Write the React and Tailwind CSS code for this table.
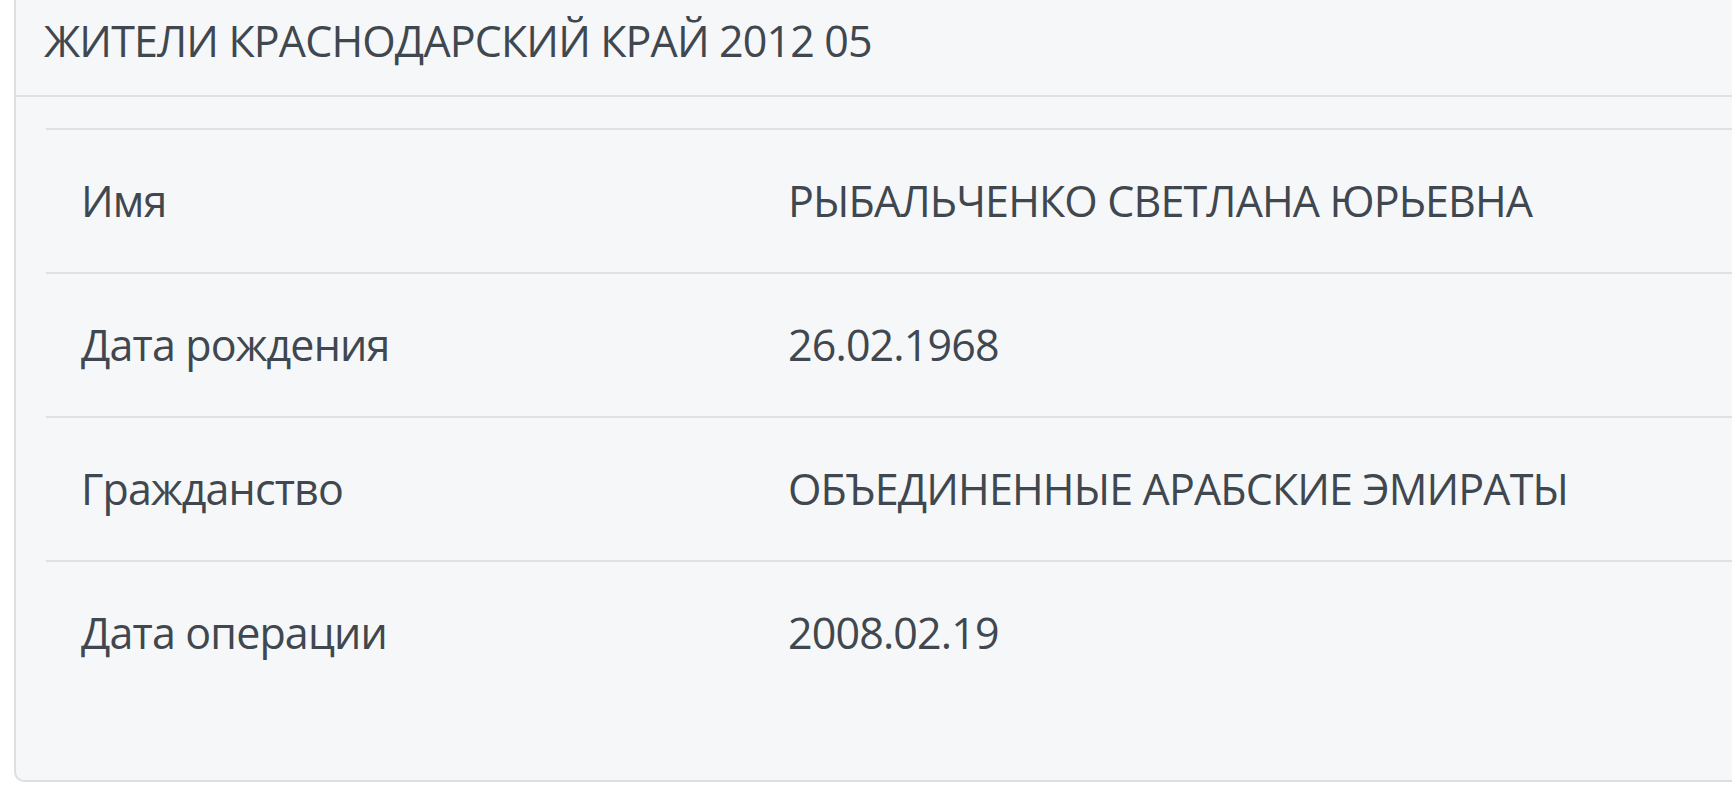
const rows = [
    { label: 'Имя', value: 'РЫБАЛЬЧЕНКО СВЕТЛАНА ЮРЬЕВНА' },
    { label: 'Дата рождения', value: '26.02.1968' },
    { label: 'Гражданство', value: 'ОБЪЕДИНЕННЫЕ АРАБСКИЕ ЭМИРАТЫ' },
    { label: 'Дата операции', value: '2008.02.19' },
];

export default function App() {
    return (
        <div className="min-h-screen overflow-hidden bg-white pl-[14px] font-['Open_Sans',sans-serif] text-[#40474f]">
            <div className="-mt-[14px] -mr-10 rounded-[10px] border-2 border-[#dcdfe2] bg-[#f6f7f9]">
                {/* Header */}
                <div className="flex h-[109px] items-center border-b-2 border-[#dfe2e5] px-[28px] pb-[2px]">
                    <h3 className="text-[43px] leading-none tracking-[-0.02em]">ЖИТЕЛИ КРАСНОДАРСКИЙ КРАЙ 2012 05</h3>
                </div>

                {/* Body */}
                <div className="px-[30px] pt-[31px] pb-[75px]">
                    <table className="w-full border-collapse">
                        <tbody>
                            {rows.map((row) => (
                                <tr key={row.label} className="h-[144px] border-t-2 border-[#dfe2e5]">
                                    <td className="w-[707px] px-[35px] align-middle text-[43px] tracking-[-0.02em]">{row.label}</td>
                                    <td className="px-[35px] align-middle text-[43px] tracking-[-0.02em]">{row.value}</td>
                                </tr>
                            ))}
                        </tbody>
                    </table>
                </div>
            </div>
        </div>
    );
}
